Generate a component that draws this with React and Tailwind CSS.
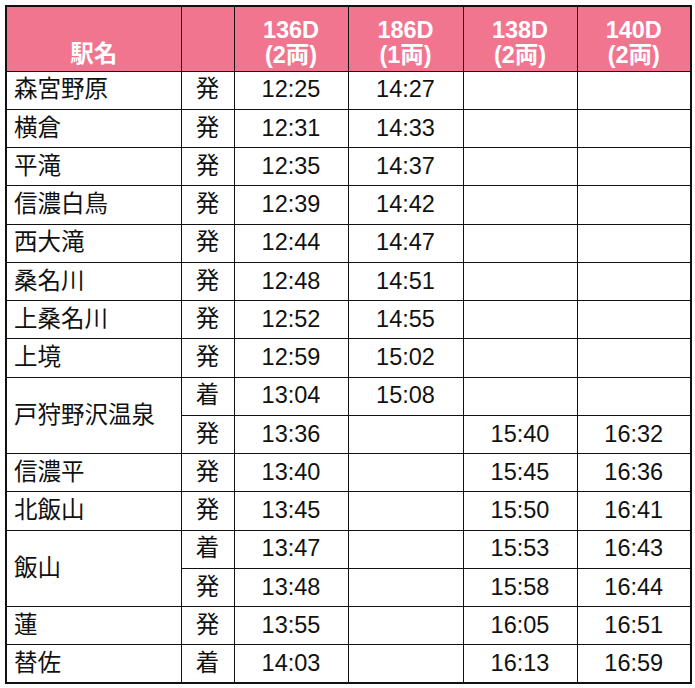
import React from "react";

const rows = [
  ["森宮野原", "発", "12:25", "14:27", "", ""],
  ["横倉", "発", "12:31", "14:33", "", ""],
  ["平滝", "発", "12:35", "14:37", "", ""],
  ["信濃白鳥", "発", "12:39", "14:42", "", ""],
  ["西大滝", "発", "12:44", "14:47", "", ""],
  ["桑名川", "発", "12:48", "14:51", "", ""],
  ["上桑名川", "発", "12:52", "14:55", "", ""],
  ["上境", "発", "12:59", "15:02", "", ""],
  ["戸狩野沢温泉", "着", "13:04", "15:08", "", "", 2],
  [null, "発", "13:36", "", "15:40", "16:32"],
  ["信濃平", "発", "13:40", "", "15:45", "16:36"],
  ["北飯山", "発", "13:45", "", "15:50", "16:41"],
  ["飯山", "着", "13:47", "", "15:53", "16:43", 2],
  [null, "発", "13:48", "", "15:58", "16:44"],
  ["蓮", "発", "13:55", "", "16:05", "16:51"],
  ["替佐", "着", "14:03", "", "16:13", "16:59"],
];

const trains = [
  ["136D", "(2両)"],
  ["186D", "(1両)"],
  ["138D", "(2両)"],
  ["140D", "(2両)"],
];

export default function App() {
  return (
    <div
      className="w-[695px] h-[688px] bg-white pt-[5px] pl-[5px]"
      style={{ fontFamily: '"Liberation Sans", "Noto Sans CJK JP", sans-serif' }}
    >
      <table className="table-fixed border-collapse border-2 border-[#111] w-[685px] text-[#111]">
        <colgroup>
          <col className="w-[175px]" />
          <col className="w-[53px]" />
          <col className="w-[114px]" />
          <col className="w-[115px]" />
          <col className="w-[114px]" />
          <col className="w-[114px]" />
        </colgroup>
        <thead>
          <tr className="h-[65px] bg-[#f27590] text-white font-bold text-[23.5px] leading-[25px]">
            <th className="border border-[#111] align-bottom pb-[4px] text-center">駅名</th>
            <th className="border border-[#111]"></th>
            {trains.map(([a, b]) => (
              <th key={a} className="border border-[#111] align-bottom pb-[3px] text-center">
                <div>{a}</div>
                <div>{b}</div>
              </th>
            ))}
          </tr>
        </thead>
        <tbody className="text-[23.5px] leading-none">
          {rows.map((r, i) => (
            <tr key={i} className="h-[38.25px]">
              {r[0] !== null && (
                <td
                  rowSpan={r[6] || 1}
                  className="border border-[#111] pl-[7px] text-left align-middle"
                >
                  {r[0]}
                </td>
              )}
              <td className="border border-[#111] text-center">{r[1]}</td>
              <td className="border border-[#111] text-center">{r[2]}</td>
              <td className="border border-[#111] text-center">{r[3]}</td>
              <td className="border border-[#111] text-center">{r[4]}</td>
              <td className="border border-[#111] text-center">{r[5]}</td>
            </tr>
          ))}
        </tbody>
      </table>
    </div>
  );
}
